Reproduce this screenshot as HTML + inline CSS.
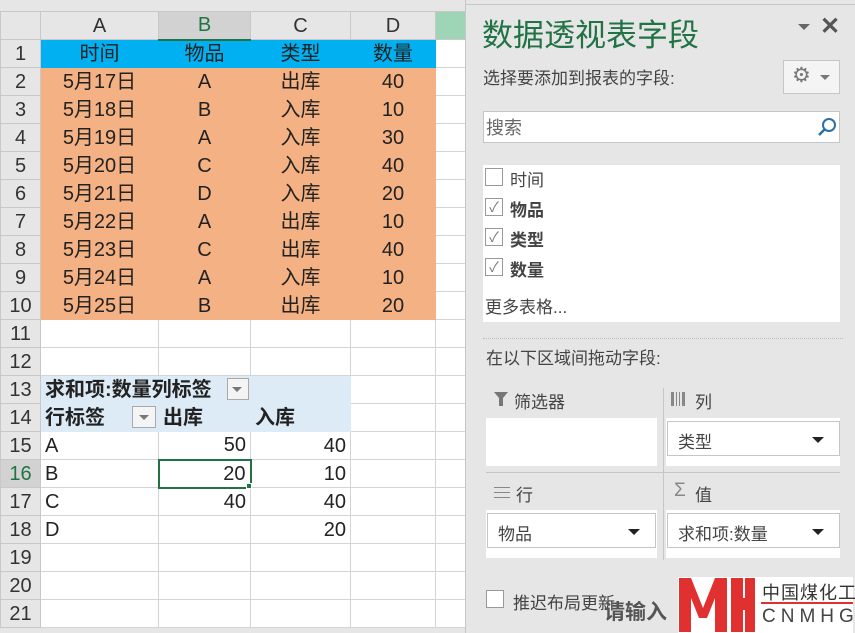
<!DOCTYPE html>
<html><head><meta charset="utf-8"><style>
*{margin:0;padding:0;box-sizing:border-box}
body{width:855px;height:633px;overflow:hidden;background:#e6e6e6;font-family:"Liberation Sans","Noto Sans CJK SC",sans-serif;position:relative}
table{position:absolute;left:0;top:11px;border-collapse:collapse;table-layout:fixed;font-size:20px;color:#222}
td{height:28px;border:1px solid #d4d4d4;padding:0 4px;white-space:nowrap;overflow:visible;background:#fff;line-height:26px}
tr.h td{background:#e6e6e6;text-align:center;color:#333;border-color:#c8c8c8}
td.rh{background:#e6e6e6;text-align:center;color:#333;border-color:#c8c8c8}
td.c{text-align:center}td.r{text-align:right}
tr.b td:not(.rh){background:#00b0f0;border-color:#00b0f0}
tr.o td.d{background:#f4b183;border-color:#f4b183}
tr.p td.d{background:#ddebf7;border-color:#ddebf7;font-weight:bold}
.abs{position:absolute}
.panel{position:absolute;left:465px;top:0px;width:390px;height:633px;background:#e6e6e6;border-left:1px solid #c6c6c6;color:#444;font-size:17px}
.panel .abs{white-space:nowrap}
.box{position:absolute;background:#fff;border:1px solid #c6c6c6}
.cb{position:absolute;width:18px;height:18px;border:1px solid #999;background:#fff}
.tri{position:absolute;width:0;height:0;border-left:6px solid transparent;border-right:6px solid transparent;border-top:6px solid #222}
</style></head><body>
<table>
<colgroup><col style="width:40px"><col style="width:118px"><col style="width:92px"><col style="width:100px"><col style="width:85px"><col style="width:30px"></colgroup>
<tr class="h"><td style="background:#e6e6e6"></td><td>A</td><td style="background:#d2d2d2;color:#217346;border-bottom:2px solid #217346">B</td><td>C</td><td>D</td><td style="background:#9fd5b7"></td></tr>
<tr class="b"><td class="rh">1</td><td class="c">时间</td><td class="c">物品</td><td class="c">类型</td><td class="c">数量</td><td style="background:#fff;border-color:#d4d4d4"></td></tr>
<tr class="o"><td class="rh">2</td><td class="c d">5月17日</td><td class="c d">A</td><td class="c d">出库</td><td class="c d">40</td><td></td></tr>
<tr class="o"><td class="rh">3</td><td class="c d">5月18日</td><td class="c d">B</td><td class="c d">入库</td><td class="c d">10</td><td></td></tr>
<tr class="o"><td class="rh">4</td><td class="c d">5月19日</td><td class="c d">A</td><td class="c d">入库</td><td class="c d">30</td><td></td></tr>
<tr class="o"><td class="rh">5</td><td class="c d">5月20日</td><td class="c d">C</td><td class="c d">入库</td><td class="c d">40</td><td></td></tr>
<tr class="o"><td class="rh">6</td><td class="c d">5月21日</td><td class="c d">D</td><td class="c d">入库</td><td class="c d">20</td><td></td></tr>
<tr class="o"><td class="rh">7</td><td class="c d">5月22日</td><td class="c d">A</td><td class="c d">出库</td><td class="c d">10</td><td></td></tr>
<tr class="o"><td class="rh">8</td><td class="c d">5月23日</td><td class="c d">C</td><td class="c d">出库</td><td class="c d">40</td><td></td></tr>
<tr class="o"><td class="rh">9</td><td class="c d">5月24日</td><td class="c d">A</td><td class="c d">入库</td><td class="c d">10</td><td></td></tr>
<tr class="o"><td class="rh">10</td><td class="c d">5月25日</td><td class="c d">B</td><td class="c d">出库</td><td class="c d">20</td><td></td></tr>
<tr><td class="rh">11</td><td></td><td></td><td></td><td></td><td></td></tr>
<tr><td class="rh">12</td><td></td><td></td><td></td><td></td><td></td></tr>
<tr class="p"><td class="rh">13</td><td class="d" colspan="2">求和项:数量列标签</td><td class="d"></td><td class="d" style="background:#fff;border-color:#d4d4d4"></td><td></td></tr>
<tr class="p"><td class="rh">14</td><td class="d">行标签</td><td class="d">出库</td><td class="d">入库</td><td class="d" style="background:#fff;border-color:#d4d4d4"></td><td></td></tr>
<tr><td class="rh">15</td><td>A</td><td class="r">50</td><td class="r">40</td><td></td><td></td></tr>
<tr><td class="rh" style="background:#d2d2d2;color:#217346">16</td><td>B</td><td class="r" style="border:2px solid #217346">20</td><td class="r">10</td><td></td><td></td></tr>
<tr><td class="rh">17</td><td>C</td><td class="r">40</td><td class="r">40</td><td></td><td></td></tr>
<tr><td class="rh">18</td><td>D</td><td></td><td class="r">20</td><td></td><td></td></tr>
<tr><td class="rh">19</td><td></td><td></td><td></td><td></td><td></td></tr>
<tr><td class="rh">20</td><td></td><td></td><td></td><td></td><td></td></tr>
<tr><td class="rh">21</td><td></td><td></td><td></td><td></td><td></td></tr>
</table>
<div class="abs" style="left:227px;top:378px;width:22px;height:22px;border:1px solid #aaa;background:#f4f4f4"><div class="tri" style="left:4px;top:8px;border-top-color:#777;border-width:5px 5px 0 5px"></div></div>
<div class="abs" style="left:132px;top:406px;width:24px;height:22px;border:1px solid #aaa;background:#f4f4f4"><div class="tri" style="left:6px;top:8px;border-top-color:#777;border-width:5px 5px 0 5px"></div></div>
<div class="abs" style="left:246px;top:483px;width:6px;height:6px;background:#217346;border:1px solid #fff"></div>

<div class="panel">
<div class="abs" style="left:0;top:4px;width:390px;border-top:1px solid #c6c6c6"></div>
<div class="abs" style="left:16px;top:10px;font-size:31px;color:#217346">数据透视表字段</div>
<div class="tri" style="left:332px;top:24px;border-top-color:#666"></div>
<div class="abs" style="left:354px;top:12px;font-size:24px;color:#555;font-weight:bold">✕</div>
<div class="abs" style="left:17px;top:64px">选择要添加到报表的字段:</div>
<div class="box" style="left:317px;top:60px;width:57px;height:34px;background:#f4f4f4"><span class="abs" style="left:8px;top:2px;font-size:21px;color:#777">⚙</span><div class="tri" style="left:36px;top:14px;border-top-color:#777;border-width:5px 5px 0 5px"></div></div>
<div class="box" style="left:17px;top:111px;width:357px;height:32px"><span class="abs" style="left:2px;top:2px;color:#666;font-size:18px">搜索</span>
<svg class="abs" style="left:333px;top:5px" width="20" height="20"><circle cx="12" cy="8" r="6" fill="none" stroke="#2b6ea8" stroke-width="2"/><line x1="8" y1="12" x2="2" y2="18" stroke="#2b6ea8" stroke-width="2.5"/></svg></div>
<div class="box" style="left:17px;top:165px;width:357px;height:157px;border:none">
<div class="cb" style="left:2px;top:3px"></div><span class="abs" style="left:27px;top:1px">时间</span>
<div class="cb" style="left:2px;top:33px;color:#777;font-size:14px;line-height:16px;text-align:center">✓</div><b class="abs" style="left:27px;top:31px">物品</b>
<div class="cb" style="left:2px;top:63px;color:#777;font-size:14px;line-height:16px;text-align:center">✓</div><b class="abs" style="left:27px;top:61px">类型</b>
<div class="cb" style="left:2px;top:93px;color:#777;font-size:14px;line-height:16px;text-align:center">✓</div><b class="abs" style="left:27px;top:91px">数量</b>
<span class="abs" style="left:2px;top:128px">更多表格...</span>
</div>
<div class="abs" style="left:17px;top:338px;width:360px;border-top:1px dotted #bbb"></div>
<div class="abs" style="left:20px;top:344px">在以下区域间拖动字段:</div>
<svg class="abs" style="left:28px;top:392px" width="14" height="14"><path d="M0 0H14L9 6V14H5V6Z" fill="#777"/></svg>
<div class="abs" style="left:48px;top:388px">筛选器</div>
<div class="abs" style="left:20px;top:418px;width:171px;height:48px;background:#fff"></div>
<div class="abs" style="left:205px;top:392px;width:14px;height:14px;border-left:2px solid #888;border-right:2px solid #888;background:repeating-linear-gradient(90deg,#888 0 1px,transparent 1px 3px)"></div>
<div class="abs" style="left:229px;top:388px">列</div>
<div class="abs" style="left:200px;top:418px;width:174px;height:48px;background:#fff"></div>
<div class="box" style="left:201px;top:421px;width:173px;height:35px"><span class="abs" style="left:10px;top:6px">类型</span><div class="tri" style="left:144px;top:15px"></div></div>
<div class="abs" style="left:20px;top:472px;width:354px;border-top:1px solid #c6c6c6"></div>
<div class="abs" style="left:197px;top:388px;height:172px;border-left:1px solid #c6c6c6"></div>
<div class="abs" style="left:28px;top:487px;width:16px;height:11px;border-top:1px solid #888;border-bottom:1px solid #888"><div style="margin-top:4px;border-top:1px solid #888"></div></div>
<div class="abs" style="left:50px;top:481px">行</div>
<div class="abs" style="left:208px;top:480px;color:#888;font-size:19px">Σ</div>
<div class="abs" style="left:229px;top:481px">值</div>
<div class="abs" style="left:20px;top:510px;width:171px;height:48px;background:#fff"></div>
<div class="box" style="left:21px;top:513px;width:169px;height:35px"><span class="abs" style="left:10px;top:6px">物品</span><div class="tri" style="left:140px;top:15px"></div></div>
<div class="abs" style="left:200px;top:510px;width:174px;height:48px;background:#fff"></div>
<div class="box" style="left:201px;top:513px;width:173px;height:35px"><span class="abs" style="left:10px;top:6px">求和项:数量</span><div class="tri" style="left:144px;top:15px"></div></div>
<div class="cb" style="left:20px;top:590px"></div>
<div class="abs" style="left:47px;top:589px">推迟布局更新</div>
<div class="abs" style="left:138px;top:596px;font-size:21px;font-weight:bold;color:#555">请输入</div>
<div class="abs" style="left:212px;top:577px;width:175px;height:56px;background:#fff"></div>
<svg class="abs" style="left:213px;top:578px" width="76" height="54"><path d="M0 0H12L24 30L36 0H48V54H36V20L28 40H20L12 20V54H0Z M52 0H64V22H64V54H52Z M64 20H66V32H64Z M66 0H76V54H66Z M52 22H76V32H52Z" fill="#e03030"/></svg>
<div class="abs" style="left:296px;top:579px;font-size:18px;color:#333;letter-spacing:1px">中国煤化工</div>
<div class="abs" style="left:295px;top:602px;width:92px;border-top:2px solid #e03030"></div>
<div class="abs" style="left:296px;top:606px;font-size:19px;color:#444;letter-spacing:5px">CNMHG</div>
</div>
</body></html>
